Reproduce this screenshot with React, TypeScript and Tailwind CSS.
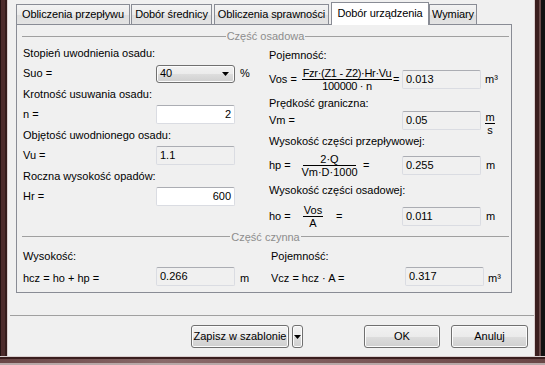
import React from "react";

function Field({ value, editable = false }: { value: string; editable?: boolean }) {
  return (
    <div
      className={
        editable
          ? "flex h-[19px] w-[79px] shrink-0 items-center justify-end rounded-[2px] border border-[#dadce2] border-t-[#abadb3] bg-white px-[3px] leading-[13px]"
          : "flex h-[19px] w-[79px] shrink-0 items-center rounded-[2px] border border-[#dadce2] border-t-[#abadb3] bg-[#f0f0f0] px-[3px] leading-[13px]"
      }
    >
      {value}
    </div>
  );
}

function Frac({ top, bottom, className = "" }: { top: string; bottom: string; className?: string }) {
  return (
    <div className={`flex shrink-0 flex-col items-center ${className}`}>
      <span className="leading-[12px]">{top}</span>
      <span className="h-px w-full bg-black" />
      <span className="leading-[12px]">{bottom}</span>
    </div>
  );
}

function GroupHeader({ title }: { title: string }) {
  return (
    <div className="flex h-[12px] items-center pl-[5px] pr-[2px]">
      <div className="h-px flex-1 bg-[#a0a0a0]" />
      <span className="px-px leading-[12px] text-[#8d8d8d]">{title}</span>
      <div className="h-px flex-1 bg-[#a0a0a0]" />
    </div>
  );
}

function Tab({ label, className }: { label: string; className: string }) {
  return (
    <div
      className={`flex h-[20px] shrink-0 items-center justify-center border border-b-0 border-[#898c95] bg-[linear-gradient(#f3f3f3_0%,#ebebeb_50%,#dedede_51%,#e3e3e3_100%)] leading-[13px] ${className}`}
    >
      {label}
    </div>
  );
}

function Button({ children, className = "" }: { children: React.ReactNode; className?: string }) {
  return (
    <div
      className={`flex h-[23px] shrink-0 items-center justify-center rounded-[3px] border border-[#707070] bg-[linear-gradient(#f2f2f2_0%,#ebebeb_50%,#dddddd_51%,#cfcfcf_100%)] leading-[13px] shadow-[inset_0_0_0_1px_#fcfcfc] ${className}`}
    >
      {children}
    </div>
  );
}

function Arrow() {
  return (
    <svg width="7" height="4" viewBox="0 0 7 4">
      <path d="M0 0h7L3.5 4z" fill="#000" />
    </svg>
  );
}

export default function App() {
  return (
    <div className="flex h-[365px] w-[545px] flex-col overflow-hidden whitespace-nowrap bg-white font-['Liberation_Sans',Arial,sans-serif] text-[11px] text-black">
      <div className="flex h-[356px]">
        {/* left window frame */}
        <div className="flex w-[8px]">
          <div className="w-px bg-[#241212]" />
          <div className="w-[4px] bg-[#4d2c2c]" />
          <div className="w-[2px] bg-[#341c1c]" />
          <div className="w-px bg-[#d9cfcf]" />
        </div>

        <div className="flex w-[526px] flex-col bg-[#f0f0f0]">
          {/* tabs */}
          <div className="flex h-[24px] items-end pl-[8px] tracking-[-0.1px]">
            <Tab label="Obliczenia przepływu" className="w-[114px]" />
            <Tab label="Dobór średnicy" className="ml-px w-[81px]" />
            <Tab label="Obliczenia sprawności" className="ml-[2px] w-[115px]" />
            <div className="relative z-10 -mb-px ml-[2px] flex h-[23px] w-[98px] shrink-0 items-start justify-center border border-b-0 border-[#898c95] bg-white pt-[4px] leading-[13px]">
              Dobór urządzenia
            </div>
            <Tab
              label="Wymiary"
              className="w-[48px] border-[#3c7fb1] bg-[linear-gradient(#eaf6fd_0%,#d9f0fc_50%,#bee6fd_51%,#a7d9f5_100%)]"
            />
          </div>

          {/* tab page */}
          <div className="ml-[8px] flex h-[269px] w-[496px] flex-col border border-[#898c95] bg-[#f0f0f0]">
            <div className="h-[20px] pt-[5px]">
              <GroupHeader title="Część osadowa" />
            </div>

            <div className="flex h-[182px] pl-[6px]">
              {/* left column */}
              <div className="flex w-[246px] flex-col">
                <div className="flex h-[16px] items-center">Stopień uwodnienia osadu:</div>
                <div className="flex h-[25px] items-center">
                  <span className="w-[133px]">Suo =</span>
                  <div className="flex h-[18px] w-[79px] items-center justify-between rounded-[3px] border border-[#707070] bg-[linear-gradient(#f2f2f2_0%,#ebebeb_50%,#dddddd_51%,#cfcfcf_100%)] pl-[3px] pr-[5px] leading-[13px] shadow-[inset_0_0_0_1px_#fcfcfc]">
                    <span>40</span>
                    <Arrow />
                  </div>
                  <span className="ml-[5px]">%</span>
                </div>
                <div className="flex h-[16px] items-center">Krotność usuwania osadu:</div>
                <div className="flex h-[25px] items-center">
                  <span className="w-[133px]">n =</span>
                  <Field value="2" editable />
                </div>
                <div className="flex h-[16px] items-center">Objętość uwodnionego osadu:</div>
                <div className="flex h-[25px] items-center">
                  <span className="w-[133px]">Vu =</span>
                  <Field value="1.1" />
                </div>
                <div className="flex h-[16px] items-center">Roczna wysokość opadów:</div>
                <div className="flex h-[25px] items-center">
                  <span className="w-[133px]">Hr =</span>
                  <Field value="600" editable />
                </div>
              </div>

              {/* right column */}
              <div className="flex flex-1 flex-col">
                <div className="flex h-[20px] items-center">Pojemność:</div>
                <div className="flex h-[28px] items-center">
                  <span className="w-[33px]">Vos =</span>
                  <Frac top="Fzr·(Z1 - Z2)·Hr·Vu" bottom="100000 · n" className="w-[90px] tracking-[-0.3px]" />
                  <span className="w-[10px] pl-px">=</span>
                  <Field value="0.013" />
                  <span className="ml-[4px]">m³</span>
                </div>
                <div className="flex h-[20px] items-center">Prędkość graniczna:</div>
                <div className="flex h-[14px] items-center">
                  <span className="w-[133px]">Vm =</span>
                  <Field value="0.05" />
                  <Frac top="m" bottom="s" className="ml-[4px] mt-[6px] w-[10px]" />
                </div>
                <div className="flex h-[28px] items-center">Wysokość części przepływowej:</div>
                <div className="flex h-[20px] items-center">
                  <span className="w-[34px]">hp =</span>
                  <Frac top="2·Q" bottom="Vm·D·1000" className="w-[53px]" />
                  <span className="w-[46px] pl-[7px]">=</span>
                  <Field value="0.255" />
                  <span className="ml-[5px]">m</span>
                </div>
                <div className="flex h-[30px] items-center">Wysokość części osadowej:</div>
                <div className="flex h-[22px] items-center">
                  <span className="w-[34px]">ho =</span>
                  <Frac top="Vos" bottom="A" className="w-[20px]" />
                  <span className="w-[79px] pl-[13px]">=</span>
                  <Field value="0.011" />
                  <span className="ml-[5px]">m</span>
                </div>
              </div>
            </div>

            {/* lower group */}
            <div className="flex h-[19px] items-center">
              <div className="w-full">
                <GroupHeader title="Część czynna" />
              </div>
            </div>
            <div className="flex pl-[6px]">
              <div className="flex w-[248px] flex-col">
                <div className="flex h-[20px] items-center">Wysokość:</div>
                <div className="flex h-[20px] items-start overflow-hidden pt-px">
                  <span className="w-[133px] pt-[3px]">hcz = ho + hp =</span>
                  <div className="h-[22px]">
                    <Field value="0.266" />
                  </div>
                  <span className="ml-[5px] pt-[3px]">m</span>
                </div>
              </div>
              <div className="flex flex-1 flex-col">
                <div className="flex h-[20px] items-center">Pojemność:</div>
                <div className="flex h-[20px] items-start overflow-hidden pt-px">
                  <span className="w-[134px] pt-[3px]">Vcz = hcz · A =</span>
                  <Field value="0.317" />
                  <span className="ml-[4px] pt-[3px]">m³</span>
                </div>
              </div>
            </div>
          </div>

          {/* separator */}
          <div className="ml-[2px] mt-[22px] h-px bg-[#a0a0a0]" />

          {/* buttons */}
          <div className="mt-[9px] flex items-center justify-end pr-[6px]">
            <Button className="w-[98px]">Zapisz w szablonie</Button>
            <Button className="ml-[3px] w-[11px]">
              <Arrow />
            </Button>
            <Button className="ml-[61px] w-[76px] border-[#3c7fb1] bg-[linear-gradient(#eaf6fd_0%,#d9f0fc_50%,#bee6fd_51%,#a7d9f5_100%)] shadow-[inset_0_0_0_1px_#c8ecff]">
              OK
            </Button>
            <Button className="ml-[11px] w-[77px]">Anuluj</Button>
          </div>
        </div>

        {/* right window frame */}
        <div className="flex w-[11px]">
          <div className="w-px bg-[#d9cfcf]" />
          <div className="w-[4px] bg-[#3a1e1e]" />
          <div className="w-[2px] bg-[#6a4a4a]" />
          <div className="w-[4px] bg-[#111111]" />
        </div>
      </div>

      {/* bottom window frame */}
      <div className="flex h-[9px] flex-col">
        <div className="h-px bg-[#d9cfcf]" />
        <div className="h-[2px] bg-[#3a1e1e]" />
        <div className="h-[4px] bg-[linear-gradient(90deg,#6a4646,#8a6a6a_30%,#7a5656_70%,#6a4646)]" />
        <div className="h-[2px] bg-[#b8a8a8]" />
      </div>
    </div>
  );
}
